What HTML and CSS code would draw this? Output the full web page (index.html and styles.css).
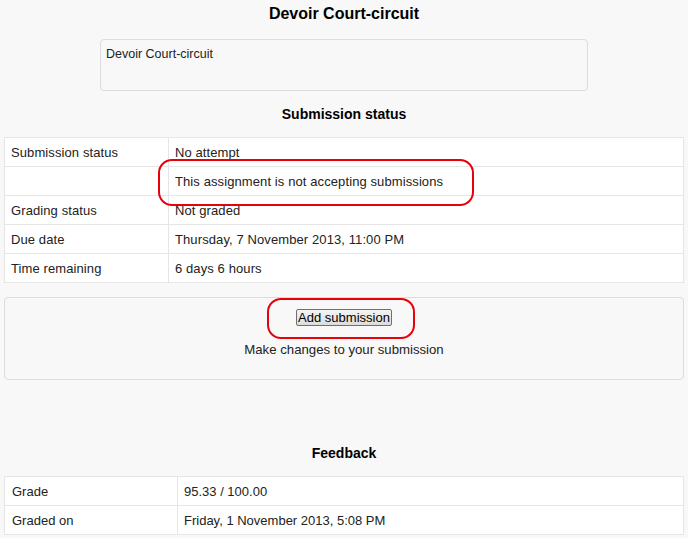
FILE: index.html
```html
<!DOCTYPE html>
<html lang="en">
<head>
    <meta charset="UTF-8">
    <meta name="viewport" content="width=device-width, initial-scale=1.0">
    <title>Devoir Court-circuit</title>
    <link rel="stylesheet" href="styles.css">
</head>
<body>

    <div class="page">
        <h2 class="page-title">Devoir Court-circuit</h2>

        <div class="intro-box">Devoir Court-circuit</div>

        <h3 class="section-title">Submission status</h3>
        <div class="table-wrap">
            <table class="info-table status-table">
                <tr>
                    <td>Submission status</td>
                    <td>No attempt</td>
                </tr>
                <tr>
                    <td></td>
                    <td>This assignment is not accepting submissions</td>
                </tr>
                <tr>
                    <td>Grading status</td>
                    <td>Not graded</td>
                </tr>
                <tr>
                    <td>Due date</td>
                    <td>Thursday, 7 November 2013, 11:00 PM</td>
                </tr>
                <tr>
                    <td>Time remaining</td>
                    <td>6 days 6 hours</td>
                </tr>
            </table>
            <!-- annotation drawn over the screenshot -->
            <div class="callout callout-status"></div>
        </div>

        <div class="submit-box">
            <span class="btn-wrap">
                <button class="btn" type="button">Add submission</button>
                <span class="callout callout-btn"></span>
            </span>
            <p class="submit-help">Make changes to your submission</p>
        </div>

        <h3 class="section-title feedback-title">Feedback</h3>
        <table class="info-table feedback-table">
            <tr>
                <td>Grade</td>
                <td>95.33 / 100.00</td>
            </tr>
            <tr>
                <td>Graded on</td>
                <td>Friday, 1 November 2013, 5:08 PM</td>
            </tr>
        </table>
    </div>

</body>
</html>
```

FILE: styles.css
```css
/* --- page --- */
body {
    margin: 0;
    background-color: #f8f8f8;
    color: #222;
    font-family: "Liberation Sans", Arial, sans-serif;
    font-size: 13px;
    line-height: 18px;
}

.page {
    padding: 0 4px;
}

.page-title {
    margin: 0 0 16px;
    padding-top: 5px;
    font-size: 16px;
    line-height: 18px;
    font-weight: 700;
    text-align: center;
    color: #000;
}

/* --- intro --- */
.intro-box {
    width: 488px;
    height: 52px;
    margin: 0 auto;
    padding: 5px 5px;
    box-sizing: border-box;
    border: 1px solid #dcdcdc;
    border-radius: 4px;
    font-size: 12.5px;
}

.section-title {
    margin: 14px 0;
    font-size: 14px;
    line-height: 18px;
    font-weight: 700;
    text-align: center;
    color: #000;
}

/* --- tables --- */
.table-wrap {
    position: relative;
}

.info-table {
    width: 100%;
    border-collapse: collapse;
    background-color: #fff;
}

.info-table td {
    border: 1px solid #e6e6e6;
    padding: 6px 7px 4px 6px;
    height: 18px;
    vertical-align: middle;
}

.status-table td {
    letter-spacing: 0.1px;
}

.status-table td:first-child {
    width: 150px;
}

.feedback-table td:first-child {
    width: 158px;
    padding-left: 7px;
}

/* --- submission box --- */
.submit-box {
    margin-top: 14px;
    height: 83px;
    padding-top: 11px;
    box-sizing: border-box;
    border: 1px solid #dcdcdc;
    border-radius: 4px;
    text-align: center;
}

.btn-wrap {
    position: relative;
    display: inline-block;
    vertical-align: top;
}

.btn {
    display: block;
    height: 17px;
    margin: 0;
    padding: 0 1px;
    border: 1px solid #707070;
    border-radius: 2px;
    background: linear-gradient(#f4f4f4, #dcdcdc);
    color: #000;
    font-family: "Liberation Sans", Arial, sans-serif;
    font-size: 13px;
    line-height: 15px;
}

.submit-help {
    margin: 14px 0 0;
    font-size: 13.2px;
}

.feedback-title {
    margin-top: 64px;
}

/* --- red annotations --- */
.callout {
    position: absolute;
    box-sizing: border-box;
    border: 2px solid #e8000b;
    border-radius: 14px;
    pointer-events: none;
}

.callout-status {
    left: 154px;
    top: 22px;
    width: 316px;
    height: 47px;
}

.callout-btn {
    left: -29px;
    top: -11px;
    right: -23px;
    bottom: -13px;
}
```
